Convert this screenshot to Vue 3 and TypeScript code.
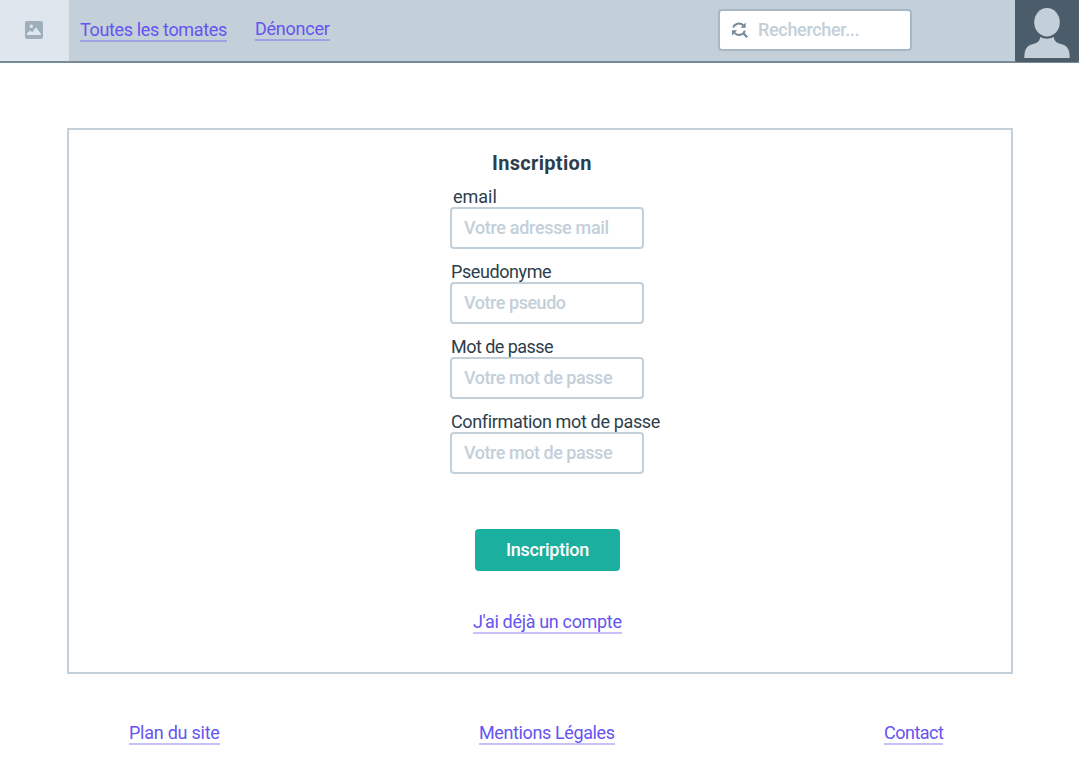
<script setup lang="ts">
import { reactive } from 'vue'

interface Field {
  id: string
  label: string
  placeholder: string
  type: string
}

const fields: Field[] = [
  { id: 'email', label: 'email', placeholder: 'Votre adresse mail', type: 'email' },
  { id: 'pseudo', label: 'Pseudonyme', placeholder: 'Votre pseudo', type: 'text' },
  { id: 'password', label: 'Mot de passe', placeholder: 'Votre mot de passe', type: 'password' },
  { id: 'confirm', label: 'Confirmation mot de passe', placeholder: 'Votre mot de passe', type: 'password' },
]

const form = reactive<Record<string, string>>({ email: '', pseudo: '', password: '', confirm: '' })
</script>

<template>
  <div class="page">
    <header class="header">
      <div class="logo">
        <svg width="18" height="18" viewBox="0 0 18 18">
          <rect width="18" height="18" rx="2" fill="#9eafbb" />
          <circle cx="6.3" cy="5.2" r="1.7" fill="#dfe6ed" />
          <path d="M2 14 V12.6 L5.2 9.2 L7.2 11.4 L11 6.2 L16 13 V14 Z" fill="#dfe6ed" />
        </svg>
      </div>
      <nav class="nav">
        <a class="link all" href="#">Toutes les tomates</a>
        <a class="link report" href="#">Dénoncer</a>
      </nav>
      <div class="search">
        <svg width="18" height="18" viewBox="0 0 18 18" fill="none" stroke="#768a99" stroke-width="2">
          <path d="M2.2 6.6 C3.4 2.4 9.4 1 12.3 4.4" />
          <path d="M14.7 1.6 V6.8 H9.5 Z" fill="#768a99" stroke="none" />
          <path d="M13.8 9.6 C12.8 14.2 6.4 15.3 3.6 11.8" />
          <path d="M1 14.4 V9.2 H6.2 Z" fill="#768a99" stroke="none" />
          <path d="M12.3 12.2 L16.2 16.2" stroke-width="2.3" />
        </svg>
        <input type="text" placeholder="Rechercher..." />
      </div>
      <div class="avatar">
        <svg width="64" height="62" viewBox="0 0 64 62">
          <ellipse cx="32" cy="22.3" rx="12.8" ry="14.2" fill="#c3cfd9" />
          <path d="M25.2 37 Q32 40.6 38.8 37 Q39 41.6 43.5 43.2 L49 45 Q54.8 47.6 54.8 58 H9.2 Q9.2 47.6 15 45 L20.5 43.2 Q25 41.6 25.2 37 Z" fill="#c3cfd9" />
        </svg>
      </div>
    </header>

    <main class="panel">
      <h1 class="title">Inscription</h1>
      <form class="form" @submit.prevent>
        <div v-for="f in fields" :key="f.id" class="field">
          <label :for="f.id" :class="f.id">{{ f.label }}</label>
          <input :id="f.id" v-model="form[f.id]" :type="f.type" :placeholder="f.placeholder" :class="f.id" />
        </div>
        <button class="submit" type="submit">Inscription</button>
      </form>
      <a class="link login" href="#">J'ai déjà un compte</a>
    </main>

    <footer class="footer">
      <a class="link plan" href="#">Plan du site</a>
      <a class="link legal" href="#">Mentions Légales</a>
      <a class="link contact" href="#">Contact</a>
    </footer>
  </div>
</template>

<style>
body {
  margin: 0;
  background: #fff;
}
</style>

<style scoped>
.page {
  width: 1079px;
  height: 782px;
  overflow: hidden;
  font-family: Roboto, "Liberation Sans", sans-serif;
  font-size: 18px;
  line-height: 21px;
  color: #2c3e4b;
}
.header {
  box-sizing: border-box;
  display: flex;
  height: 63px;
  background: #c3cfd9;
  border-bottom: 2px solid #768a99;
}
.logo {
  display: flex;
  justify-content: center;
  align-items: center;
  box-sizing: border-box;
  width: 69px;
  height: 61px;
  padding: 0 1px 1px 0;
  background: #dfe6ed;
}
.nav {
  display: flex;
  align-items: flex-start;
  gap: 28px;
  padding: 18px 0 0 11px;
}
.link {
  display: block;
  box-sizing: border-box;
  height: 23px;
  color: #6554f0;
  text-decoration: none;
  white-space: nowrap;
  border-bottom: 2px solid rgba(101, 84, 240, 0.36);
}
.all {
  width: 147px;
  margin-top: 1px;
  letter-spacing: -0.35px;
}
.report {
  width: 75px;
  letter-spacing: -0.25px;
}
.search {
  box-sizing: border-box;
  display: flex;
  align-items: center;
  width: 194px;
  height: 42px;
  margin: 9px 0 0 388px;
  padding: 0 0 1px 11px;
  gap: 9px;
  background: #fff;
  border: 2px solid #a9b8c5;
  border-radius: 4px;
}
.search svg {
  flex: none;
}
input {
  box-sizing: border-box;
  min-width: 0;
  font: 500 18px/21px Roboto, "Liberation Sans", sans-serif;
  color: #2c3e4b;
  outline: none;
}
input::placeholder {
  color: #c3cfd9;
  opacity: 1;
}
.search input {
  flex: 1;
  padding: 0;
  border: 0;
  background: none;
  letter-spacing: -0.32px;
}
.avatar {
  width: 64px;
  height: 62px;
  margin-left: auto;
  background: #4b5d6b;
  border-radius: 0 0 2px 2px;
}
.avatar svg {
  display: block;
}
.panel {
  box-sizing: border-box;
  width: 946px;
  height: 546px;
  margin: 65px 0 0 67px;
  padding-top: 21px;
  border: 2px solid #c3cfd9;
}
.title {
  width: 110px;
  margin: 0 0 0 423px;
  font-size: 20px;
  line-height: 24px;
  font-weight: 700;
  letter-spacing: 0.32px;
}
.form {
  display: flex;
  flex-direction: column;
  gap: 12px;
  margin: 11px 0 0 381px;
}
.field {
  display: flex;
  flex-direction: column;
  width: 194px;
}
.field label {
  padding-left: 1px;
  white-space: nowrap;
}
.field label.email {
  padding-left: 3px;
}
.field label.pseudo {
  letter-spacing: -0.42px;
}
.field label.password {
  letter-spacing: -0.55px;
}
.field label.confirm {
  letter-spacing: -0.35px;
}
.field input {
  height: 42px;
  padding: 0 12px 2px;
  border: 2px solid #c3cfd9;
  border-radius: 4px;
  letter-spacing: -0.46px;
}
.field input.email {
  letter-spacing: -0.32px;
}
.submit {
  width: 145px;
  height: 42px;
  margin: 43px 0 0 25px;
  padding: 0 0 2px;
  border: 0;
  border-radius: 4px;
  background: #1baf9f;
  color: #fff;
  font: 500 18px/21px Roboto, "Liberation Sans", sans-serif;
  letter-spacing: -0.22px;
}
.login {
  width: 149px;
  margin: 40px 0 0 404px;
  letter-spacing: -0.33px;
}
.footer {
  display: flex;
  padding: 48px 0 0 129px;
}
.plan {
  width: 91px;
  letter-spacing: -0.25px;
}
.legal {
  width: 136px;
  margin-left: 259px;
  letter-spacing: -0.38px;
}
.contact {
  width: 59px;
  margin-left: 269px;
  letter-spacing: -0.5px;
}
</style>
